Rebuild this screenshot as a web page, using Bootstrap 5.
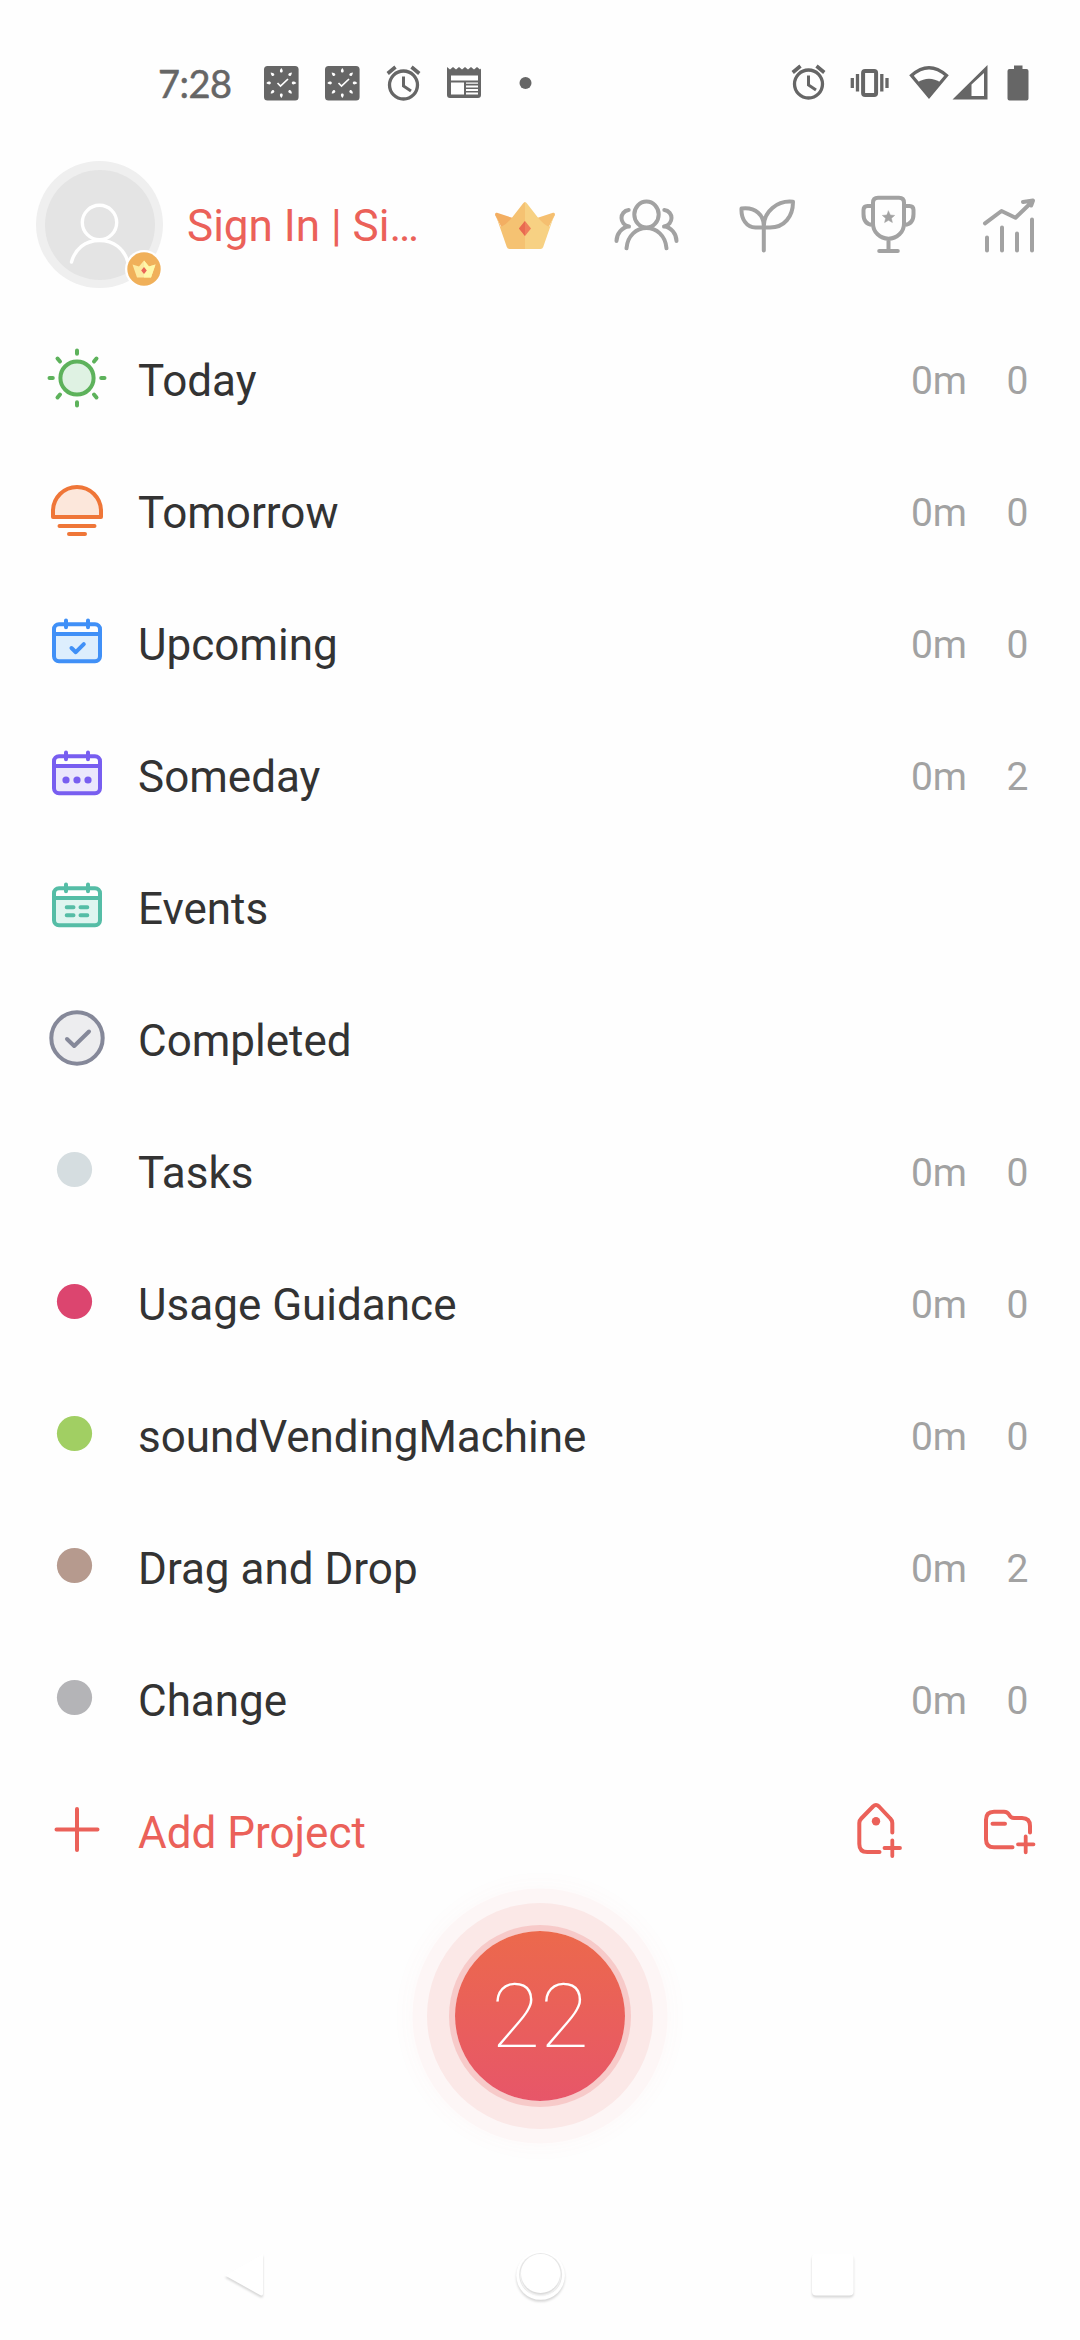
<!DOCTYPE html>
<html lang="en">
<head>
<meta charset="utf-8">
<meta name="viewport" content="width=device-width, initial-scale=1">
<title>Projects</title>
<link href="https://cdn.jsdelivr.net/npm/bootstrap@5.3.0/dist/css/bootstrap.min.css" rel="stylesheet">
<style>
  :root { --accent: #eb6159; --muted: #a2a2a2; --sys: #666; }
  body { background: #fefefe; color: #333; font-family: Roboto, "Liberation Sans", sans-serif; }
  .screen { width: 1080px; height: 2340px; overflow: hidden; }
  svg { display: block; flex: none; }
  .statusbar { height: 134px; padding: 32px 24.5px 0 158px; color: var(--sys); }
  .clock { font: 400 38px/70px Lato, sans-serif; width: 93px; letter-spacing: -.5px; -webkit-text-stroke: .5px var(--sys); }
  .topbar { height: 181px; padding: 0 11.5px 0 36px; }
  .avatar { width: 127px; height: 127px; background: #efefef; }
  .avatar-in { width: 110px; height: 110px; background: #e4e4e4; }
  .vip { right: -.5px; bottom: -.5px; }
  .signin { width: 246px; margin-left: 24px; padding-top: 2px; font-size: 44px; color: var(--accent); }
  .tools { margin-left: auto; color: var(--muted); }
  .ln { fill: none; stroke: currentColor; stroke-width: 4; stroke-linecap: round; stroke-linejoin: round; }
  .entry { height: 132px; font-size: 44px; line-height: 52px; }
  .figures { font-size: 39px; color: var(--muted); gap: 39.5px; padding-right: 51.5px; }
  .accent { color: var(--accent); }
  .green { color: #5db25b; } .orange { color: #ef7638; } .blue { color: #4090f7; }
  .violet { color: #785ef0; } .teal { color: #55bda6; } .slate { color: #858899; }
  .timer-area { height: 233px; }
  .timer { width: 170px; height: 170px; padding-top: 2px; font-size: 89px; font-weight: 100; line-height: 1; color: #fff;
    background: linear-gradient(#ec694c, #e75669);
    box-shadow: 0 0 0 6px #f7cac9, 0 0 0 28px #fbe8e7, 0 0 0 42.5px #fdf6f6, 0 0 22px 46px rgba(235,97,89,.03); }
  .sysnav { height: 120px; margin-top: 88px; padding-left: 212px; }
  .lift { filter: drop-shadow(0 2.5px 1px rgba(0,0,0,.16)); fill: #fff; }
</style>
</head>
<body>
<main class="screen d-flex flex-column">

  <header class="statusbar d-flex align-items-center justify-content-between flex-shrink-0 pb-0">
    <div class="d-flex align-items-center">
      <span class="clock">7:28</span>
      <svg width="61" height="60" viewBox="251 53 61 60"><g id="watch"><rect x="264" y="66" width="34.600" height="34.600" rx="3.500" fill="#666"/>
        <g fill="#fff"><g id="petals"><path id="petal" d="M281.300 68c-2.200 2.500-1.500 4.500 0 4.500s2.200-2 0-4.500z"/><use href="#petal" transform="rotate(45 281.300 83)"/><use href="#petal" transform="rotate(90 281.300 83)"/><use href="#petal" transform="rotate(135 281.300 83)"/></g><use href="#petals" transform="rotate(180 281.300 83)"/></g>
        <path d="M277.500 83l3 3 7.500-7" fill="none" stroke="#fff" stroke-width="1.700"/></g></svg>
      <svg width="61" height="60" viewBox="251 53 61 60"><use href="#watch"/></svg>
      <svg width="61" height="60" viewBox="-30.500 -30 61 60"><g id="alarm" fill="none" stroke="#666"><circle cx="0" cy="2" r="14" stroke-width="3.300"/><path d="M0-6.500V3l7.500 5" stroke-width="3"/><path d="M-15.800-9.500l7.800-6.500M15.800-9.500L8-16" stroke-width="3.600"/></g></svg>
      <svg width="61" height="60" viewBox="434 53 61 60"><path fill="#666" fill-rule="evenodd" d="M447 67l3 2.500 3-2.500 3 2.500 3-2.500 3 2.500 3-2.500 3 2.500 3-2.500 3 2.500 3-2.500 3 2.500 1-1V95q0 3-3 3H450q-3 0-3-3zM451 75.500v5h27v-5zM451 82.500V94.500h13V82.500zM466 82.500v1.200h12v-1.200zM466 85.500v2h12v-2zM466 89v2h12v-2zM466 92.500v2h12v-2z"/></svg>
      <svg width="61" height="60" viewBox="494.500 53 61 60"><circle cx="525" cy="83" r="6" fill="#666"/></svg>
    </div>
    <div class="d-flex align-items-center">
      <svg width="61" height="60" viewBox="-30.500 -30 61 60"><use href="#alarm" transform="translate(0 -1)"/></svg>
      <svg width="61" height="60" viewBox="838.500 53 61 60"><g fill="none" stroke="#666"><rect x="862.600" y="71" width="13" height="24" rx="2" stroke-width="4"/><path d="M857 74v17.500M881.300 74v17.500M851.800 78v10M886.500 78v10" stroke-width="3.300"/></g></svg>
      <svg width="102" height="60" viewBox="899.500 53 102 60"><path d="M911 75.500Q928.500 60 946 75.500L928.500 96.500z" fill="none" stroke="#666" stroke-width="3.300"/><path d="M917 82.500q11.500-7.500 23 0L928.500 98z" fill="#666"/><path fill="#666" fill-rule="evenodd" d="M952 99.500L987 65v34.500zM971 84.500V96h12.500V73z"/></svg>
      <svg width="54" height="60" viewBox="1001.500 53 54 60"><path d="M1013.500 65.500h8.500V69h4q2 0 2 2V98.500q0 2-2 2h-17q-2 0-2-2V71q0-2 2-2h4.500z" fill="#666"/></svg>
    </div>
  </header>

  <section class="topbar d-flex align-items-center flex-shrink-0">
    <div class="avatar rounded-circle position-relative d-flex align-items-center justify-content-center flex-shrink-0">
      <div class="avatar-in rounded-circle">
        <svg width="110" height="110" viewBox="0 0 110 110" fill="none" stroke="#fff" stroke-width="3.400" stroke-linecap="round"><circle cx="54.500" cy="52.500" r="17.200"/><path d="M26.500 92C30 79 40 70.500 54.500 70.500S79 79 82.500 91"/></svg>
      </div>
      <svg class="vip position-absolute" width="40" height="40" viewBox="-20 -20 40 40"><circle r="19" fill="#fff"/><circle r="16.700" fill="#f0b05a"/><path d="M-11.500-4.500l6.500 2L0-8.500l5 6 6.500-2L7 8.500H-7z" fill="#fdeaa0"/><path d="M0-8.500l5 6 6.500-2L7 8.500H0z" fill="#fff8a8"/><path d="M0-2l2.800 3.400L0 5l-2.800-3.600z" fill="#ea6658"/></svg>
    </div>
    <div class="signin text-nowrap">Sign In | Si…</div>
    <nav class="tools d-flex">
      <svg width="121" height="80" viewBox="-61 -40 121 80">
        <path d="M-28-12.200L-12-7-22 5-30-10q0-3 2-2.200z" fill="#f3ae62"/><path d="M28-12.200L12-7 22 5 30-10q0-3-2-2.200z" fill="#f5bf70"/>
        <path d="M-29.500-10.500L-24 2Q-18-1-12.500-8L-2-21.500Q-1-23 0-23V24H-15.500q-2 0-2.700-2z" fill="#f5c272"/><path d="M29.500-10.500L24 2Q18-1 12.500-8L2-21.500Q1-23 0-23V24H15.500q2 0 2.700-2z" fill="#f7d183"/>
        <path d="M0-4l6 7.500L0 11-6 3.500z" fill="#ef7d5c"/><path d="M0-4v15L-6 3.500z" fill="#e96a50"/></svg>
      <svg width="121" height="80" viewBox="-61.500 -40 121 80" class="ln"><ellipse cy="-10.500" rx="12.200" ry="13"/><path d="M-20 23.300C-19 10.500-10 3 0 3S19 10.500 20 23.300M-17.800-15C-22.500-14.500-25-10.500-25-7s2.500 7.500 7.500 8.500C-24.500 2-30 9-30 16M17.800-15C22.500-14.500 25-10.500 25-7s-2.500 7.500-7.500 8.500C24.500 2 30 9 30 16"/></svg>
      <svg width="121" height="80" viewBox="-61 -40 121 80" class="ln"><path d="M-3.200 25.500V1C-3-9-11-18.500-25.500-16.500-26-6-20.500 2.500-11.500 2.500H3C17.500 2.500 26-8.500 26-23.300 10-25-3.200-13-3.200 1"/></svg>
      <svg width="121" height="80" viewBox="-61.500 -40 121 80" class="ln"><path d="M-10.500-27.300h21q5 0 5 5v21C15.500 7 8.500 13.700 0 13.700S-15.500 7-15.500-1.300v-21q0-5 5-5zM-16-19h-5q-4 0-4 4v4C-25-4-22-.500-16 0M16-19h5q4 0 4 4v4C25-4 22-.500 16 0M0 14v12M-9.300 26H9.300"/><path d="M0-14l1.800 4 4.400.400-3.300 2.900 1 4.300L0-4.700l-3.900 2.300 1-4.300-3.300-2.900 4.400-.400z" fill="currentColor" stroke-width=".5"/></svg>
      <svg width="121" height="80" viewBox="-61 -40 121 80" class="ln"><path d="M-22 25.500v-13M-7 25.500V2.500M8 25.500V8.500M23 25.500V-5.500M-24-1.700L-7.500-14 6.500-7.300 23.300-23.500M14-23l10-1.500-1.800 5"/></svg>
    </nav>
  </section>

  <div class="list-group list-group-flush flex-shrink-0">
    <div class="entry d-flex align-items-center"><svg class="green" width="138" height="132" viewBox="0 0 138 132"><g class="ln"><circle cx="77" cy="63" r="16.600" fill="#dff2e3"/><path d="M77 35.500v3.300M77 87.200v3.300M49.500 63h3.300M101.200 63h3.300M57.500 43.500l2.500 3M96.500 43.500l-2.500 3M57.500 82.500l2.500-3M96.500 82.500l-2.500-3"/></g></svg><span class="flex-grow-1">Today</span><div class="figures d-flex"><span>0m</span><span>0</span></div></div>
    <div class="entry d-flex align-items-center"><svg class="orange" width="138" height="132" viewBox="0 0 138 132"><g class="ln"><path d="M53 70V64a24 24 0 0 1 48 0V70z" fill="#fce7db"/><path d="M59.500 79H94.500M69 87H85"/></g></svg><span class="flex-grow-1">Tomorrow</span><div class="figures d-flex"><span>0m</span><span>0</span></div></div>
    <div class="entry d-flex align-items-center"><svg class="blue" width="138" height="132" viewBox="0 0 138 132"><path d="M54 55H100V82H54z" fill="#ddeefd"/><g class="ln"><g id="cal"><rect x="54" y="45.300" width="46" height="37" rx="5"/><path d="M54 55H100M66 41.500v6.800M88 41.500v6.800"/></g><path d="M71.500 69l4.300 4.200 8-8"/></g></svg><span class="flex-grow-1">Upcoming</span><div class="figures d-flex"><span>0m</span><span>0</span></div></div>
    <div class="entry d-flex align-items-center"><svg class="violet" width="138" height="132" viewBox="0 0 138 132"><path d="M54 55H100V82H54z" fill="#ebe7fc"/><g class="ln"><use href="#cal"/></g><g fill="currentColor"><circle cx="66" cy="69" r="3.600"/><circle cx="77" cy="69" r="3.600"/><circle cx="88" cy="69" r="3.600"/></g></svg><span class="flex-grow-1">Someday</span><div class="figures d-flex"><span>0m</span><span>2</span></div></div>
    <div class="entry d-flex align-items-center"><svg class="teal" width="138" height="132" viewBox="0 0 138 132"><path d="M54 55H100V82H54z" fill="#dff5f0"/><g class="ln"><use href="#cal"/><path d="M66.700 64.300h6.800M80.500 64.300h6.800M66.700 72.300h6.800M80.500 72.300h6.800"/></g></svg><span class="flex-grow-1">Events</span></div>
    <div class="entry d-flex align-items-center"><svg class="slate" width="138" height="132" viewBox="0 0 138 132"><g class="ln"><circle cx="77" cy="63" r="25.700" fill="#ededef"/><path d="M67 64l7.200 7L89 56.500"/></g></svg><span class="flex-grow-1">Completed</span></div>
    <div class="entry d-flex align-items-center"><svg width="138" height="132"><circle cx="74.500" cy="62.500" r="17.600" fill="#d5dde0"/></svg><span class="flex-grow-1">Tasks</span><div class="figures d-flex"><span>0m</span><span>0</span></div></div>
    <div class="entry d-flex align-items-center"><svg width="138" height="132"><circle cx="74.500" cy="62.500" r="17.600" fill="#dc456f"/></svg><span class="flex-grow-1">Usage Guidance</span><div class="figures d-flex"><span>0m</span><span>0</span></div></div>
    <div class="entry d-flex align-items-center"><svg width="138" height="132"><circle cx="74.500" cy="62.500" r="17.600" fill="#a1cf63"/></svg><span class="flex-grow-1">soundVendingMachine</span><div class="figures d-flex"><span>0m</span><span>0</span></div></div>
    <div class="entry d-flex align-items-center"><svg width="138" height="132"><circle cx="74.500" cy="62.500" r="17.600" fill="#b69a8e"/></svg><span class="flex-grow-1">Drag and Drop</span><div class="figures d-flex"><span>0m</span><span>2</span></div></div>
    <div class="entry d-flex align-items-center"><svg width="138" height="132"><circle cx="74.500" cy="62.500" r="17.600" fill="#b4b4b7"/></svg><span class="flex-grow-1">Change</span><div class="figures d-flex"><span>0m</span><span>0</span></div></div>
    <div class="entry accent d-flex align-items-center"><svg width="138" height="132" viewBox="0 0 138 132"><path class="ln" d="M77 42V83M56.500 62.500H97.500"/></svg><span class="flex-grow-1">Add Project</span>
      <svg width="120" height="132" viewBox="820 0 120 132" class="ln"><path d="M892.300 65.500V56q0-2.500-2-4.500L879 39.500q-3-3-6 0L861.300 51.500q-2 2-2 4.500V77q0 8 8 8H879.500"/><circle cx="876" cy="54.300" r="4.200" fill="currentColor" stroke="none"/><path d="M892.300 73.300V89M884.500 81H900" stroke-width="3.800"/></svg>
      <svg width="140" height="132" viewBox="940 0 140 132" class="ln"><path d="M1030 65.500V59q0-8-8-8H1014q-3.500 0-5-3.500-1.500-2.800-5-2.800H994q-8 0-8 8V72.300q0 8 8 8H1012.500M992.500 56.700H1005"/><path d="M1025.700 69.500V85.300M1018 77.300H1033.500" stroke-width="3.800"/></svg>
    </div>
  </div>

  <div class="timer-area d-flex align-items-center justify-content-center flex-shrink-0">
    <div class="timer rounded-circle d-flex align-items-center justify-content-center">22</div>
  </div>

  <nav class="sysnav d-flex flex-shrink-0">
    <svg width="282" height="120" viewBox="212 2220 282 120"><path class="lift" d="M225 2275.500L263 2254V2293.500q0 3-3 1.500z"/></svg>
    <svg width="300" height="120" viewBox="494 2220 300 120"><circle class="lift" cx="540.600" cy="2275.500" r="24.300"/><circle cx="540.600" cy="2274.500" r="21.500" fill="#e9e9e9"/><circle cx="540.600" cy="2275.500" r="20.500" fill="#fff"/><circle class="lift" cx="540.600" cy="2273.500" r="19.600"/></svg>
    <svg width="100" height="120" viewBox="794 2220 100 120"><rect class="lift" x="812" y="2254" width="41.500" height="41.500" rx="4"/></svg>
  </nav>
</main>
<script src="https://cdn.jsdelivr.net/npm/bootstrap@5.3.0/dist/js/bootstrap.bundle.min.js"></script>
</body>
</html>
